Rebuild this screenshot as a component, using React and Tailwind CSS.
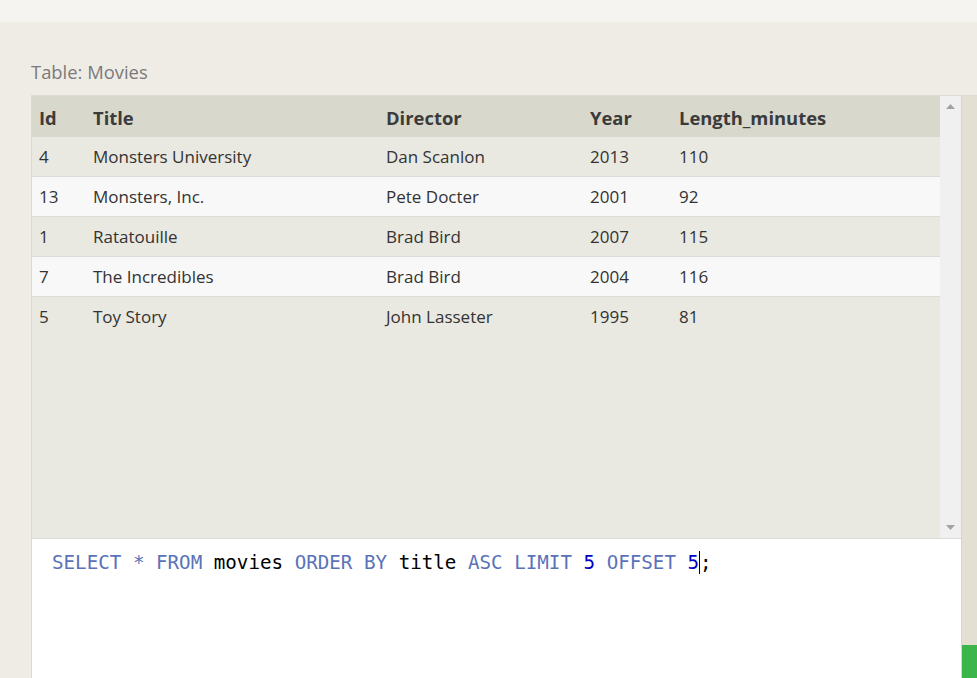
const rows = [
  { id: 4, title: "Monsters University", director: "Dan Scanlon", year: 2013, length: 110 },
  { id: 13, title: "Monsters, Inc.", director: "Pete Docter", year: 2001, length: 92 },
  { id: 1, title: "Ratatouille", director: "Brad Bird", year: 2007, length: 115 },
  { id: 7, title: "The Incredibles", director: "Brad Bird", year: 2004, length: 116 },
  { id: 5, title: "Toy Story", director: "John Lasseter", year: 1995, length: 81 },
];

const Kw = ({ children }) => <span className="text-[#5a72b8]">{children}</span>;
const Num = ({ children }) => <span className="text-[#0000c8]">{children}</span>;

const App = () => {
  return (
    <div className="w-[977px] h-[678px] overflow-hidden bg-[#f5f4f0] font-['Open_Sans',sans-serif]">
      <div className="h-[22px]" />
      <div className="h-[656px] bg-[#efece5] pl-[31px]">
        <div className="h-[73px] flex items-end pb-[9px] text-[18.4px] text-[#7a7a7a]">Table: Movies</div>
        <div className="flex h-[583px] border-t border-l border-[#dddad2]">
          <div className="w-[929px] flex flex-col shrink-0">
            {/* results */}
            <div className="h-[443px] flex bg-[#e9e8e1] border-b border-[#dcdcd6]">
              <div className="w-[908px]">
                <div className="grid grid-cols-[54px_293px_204px_89px_1fr] h-[41px] items-center bg-[#d9d8cc] text-[18.4px] font-bold text-[#3b3b3b] pl-[7px] pt-[2px]">
                  <div>Id</div>
                  <div>Title</div>
                  <div>Director</div>
                  <div>Year</div>
                  <div>Length_minutes</div>
                </div>
                {rows.map((r, i) => (
                  <div
                    key={r.id}
                    className={
                      "grid grid-cols-[54px_293px_204px_89px_1fr] h-[40px] items-center text-[17px] text-[#333] pl-[7px] " +
                      (i % 2 === 1 ? "bg-[#f8f8f8] " : "bg-[#e9e8e1] ") +
                      (i < rows.length - 1 ? "border-b border-[#dcdcd6]" : "")
                    }
                  >
                    <div>{r.id}</div>
                    <div>{r.title}</div>
                    <div>{r.director}</div>
                    <div>{r.year}</div>
                    <div>{r.length}</div>
                  </div>
                ))}
              </div>
              <div className="w-[21px] bg-[#f0f0f0] flex flex-col items-center justify-between py-[8px]">
                <svg width="9" height="5" viewBox="0 0 9 5"><path d="M4.5 0L9 5H0z" fill="#a3a3a3" /></svg>
                <svg width="9" height="5" viewBox="0 0 9 5"><path d="M0 0H9L4.5 5z" fill="#a3a3a3" /></svg>
              </div>
            </div>
            {/* editor */}
            <div className="flex-1 bg-white pl-[20px] pt-[12px] font-['DejaVu_Sans_Mono',monospace] text-[19.2px] leading-[24px] text-black">
              <Kw>SELECT</Kw> <Kw>*</Kw> <Kw>FROM</Kw> movies <Kw>ORDER</Kw> <Kw>BY</Kw> title <Kw>ASC</Kw>{" "}
              <Kw>LIMIT</Kw> <Num>5</Num> <Kw>OFFSET</Kw> <Num>5</Num>
              <span className="border-l border-black">;</span>
            </div>
          </div>
          <div className="flex-1 border-l border-[#d8d5cc] bg-[#e3dfd3] flex flex-col justify-end">
            <div className="h-[33px] bg-[#3cb54a]" />
          </div>
        </div>
      </div>
    </div>
  );
};

export default App;
